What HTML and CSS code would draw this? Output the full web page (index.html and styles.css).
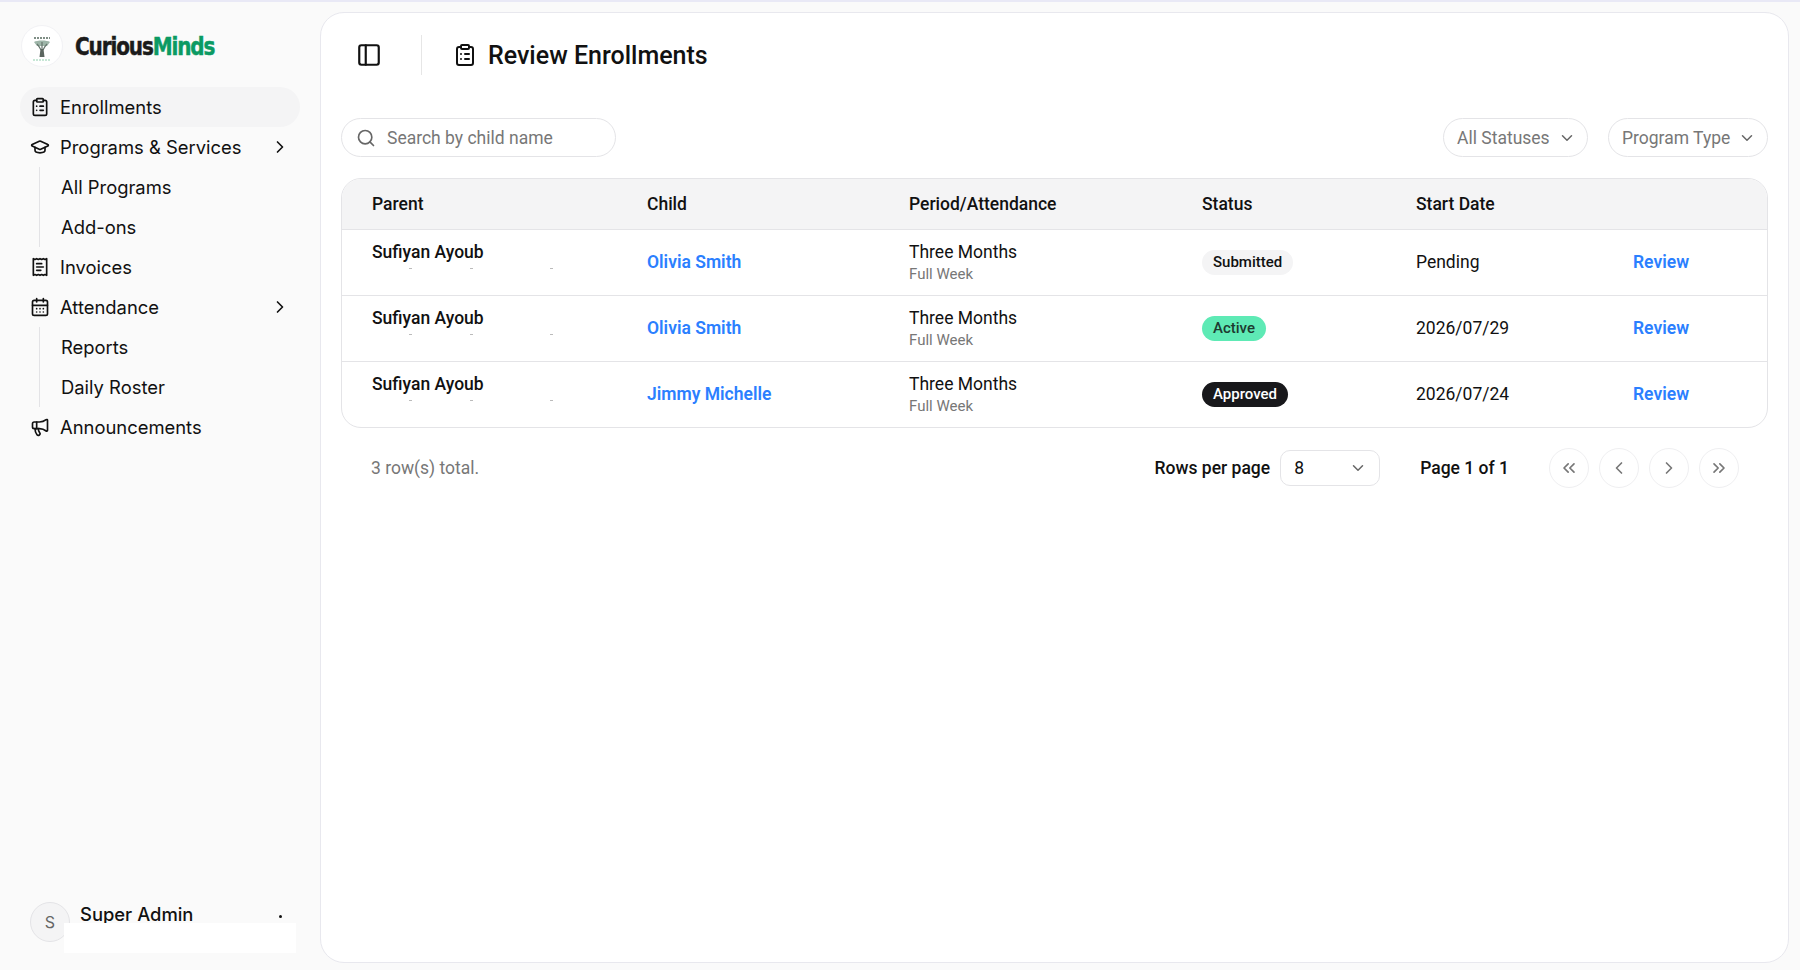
FILE: index.html
```html
<!DOCTYPE html>
<html lang="en">
<head>
    <meta charset="UTF-8">
    <meta name="viewport" content="width=device-width, initial-scale=1.0">
    <title>Review Enrollments</title>
    <link rel="stylesheet" href="styles.css">
</head>
<body>
    <aside class="sidebar">
        <div class="brand">
            <div class="brand-logo">
                <svg class="tree" width="22" height="26" viewBox="0 0 22 26" fill="none">
                    <path d="M3 2h16" stroke="#55695e" stroke-width="1.6" stroke-dasharray="2 1"/>
                    <path d="M3 6c3-2 13-2 16 0l-3 4H6z" fill="#9db5a8"/>
                    <path d="M6 8c2 2 3 4 4 6M16 8c-2 2-3 4-4 6M11 6v8" stroke="#66756d" stroke-width="1.2"/>
                    <path d="M9.5 13h3l1 8h-5z" fill="#5b655f"/>
                    <path d="M2 24h18" stroke="#8fd0ae" stroke-width="1.2" stroke-dasharray="2 1"/>
                </svg>
            </div>
            <div class="brand-name">Curious<span class="brand-green">Minds</span></div>
        </div>

        <nav class="nav">
            <a class="nav-item active">
                <svg class="icon" viewBox="0 0 24 24"><rect width="8" height="4" x="8" y="2" rx="1" ry="1"/><path d="M16 4h2a2 2 0 0 1 2 2v14a2 2 0 0 1-2 2H6a2 2 0 0 1-2-2V6a2 2 0 0 1 2-2h2"/><path d="M12 11h4"/><path d="M12 16h4"/><path d="M8 11h.01"/><path d="M8 16h.01"/></svg>
                <span>Enrollments</span>
            </a>
            <a class="nav-item">
                <svg class="icon" viewBox="0 0 24 24"><path d="M21.42 10.922a1 1 0 0 0-.019-1.838L12.83 5.18a2 2 0 0 0-1.66 0L2.6 9.08a1 1 0 0 0 0 1.832l8.57 3.908a2 2 0 0 0 1.66 0z"/><path d="M6 12.5V16a6 3 0 0 0 12 0v-3.5"/></svg>
                <span>Programs &amp; Services</span>
                <svg class="icon chevron" viewBox="0 0 24 24"><path d="m9 18 6-6-6-6"/></svg>
            </a>
            <div class="sub-nav">
                <a class="sub-item">All Programs</a>
                <a class="sub-item">Add-ons</a>
            </div>
            <a class="nav-item">
                <svg class="icon" viewBox="0 0 24 24"><path d="M4 2v20l2-1 2 1 2-1 2 1 2-1 2 1 2-1 2 1V2l-2 1-2-1-2 1-2-1-2 1-2-1-2 1Z"/><path d="M14 8H8"/><path d="M16 12H8"/><path d="M13 16H8"/></svg>
                <span>Invoices</span>
            </a>
            <a class="nav-item">
                <svg class="icon" viewBox="0 0 24 24"><path d="M8 2v4"/><path d="M16 2v4"/><rect width="18" height="18" x="3" y="4" rx="2"/><path d="M3 10h18"/><path d="M8 14h.01"/><path d="M12 14h.01"/><path d="M16 14h.01"/><path d="M8 18h.01"/><path d="M12 18h.01"/><path d="M16 18h.01"/></svg>
                <span>Attendance</span>
                <svg class="icon chevron" viewBox="0 0 24 24"><path d="m9 18 6-6-6-6"/></svg>
            </a>
            <div class="sub-nav">
                <a class="sub-item">Reports</a>
                <a class="sub-item">Daily Roster</a>
            </div>
            <a class="nav-item">
                <svg class="icon" viewBox="0 0 24 24"><path d="M11 6a13 13 0 0 0 8.4-2.8A1 1 0 0 1 21 4v12a1 1 0 0 1-1.6.8A13 13 0 0 0 11 14H5a2 2 0 0 1-2-2V8a2 2 0 0 1 2-2z"/><path d="M6 14a12 12 0 0 0 2.4 7.2 2 2 0 0 0 3.2-2.4A8 8 0 0 1 10 14"/><path d="M8 6v8"/></svg>
                <span>Announcements</span>
            </a>
        </nav>

        <div class="user">
            <div class="avatar">S</div>
            <div class="user-name">Super Admin</div>
            <div class="user-dot"></div>
            <div class="user-cover"></div>
        </div>
    </aside>

    <main class="content">
        <header class="page-header">
            <svg class="icon panel-icon" viewBox="0 0 24 24"><rect width="18" height="18" x="3" y="3" rx="2"/><path d="M9 3v18"/></svg>
            <div class="header-divider"></div>
            <svg class="icon title-icon" viewBox="0 0 24 24"><rect width="8" height="4" x="8" y="2" rx="1" ry="1"/><path d="M16 4h2a2 2 0 0 1 2 2v14a2 2 0 0 1-2 2H6a2 2 0 0 1-2-2V6a2 2 0 0 1 2-2h2"/><path d="M12 11h4"/><path d="M12 16h4"/><path d="M8 11h.01"/><path d="M8 16h.01"/></svg>
            <h1>Review Enrollments</h1>
        </header>

        <div class="toolbar">
            <div class="search">
                <svg class="icon search-icon" viewBox="0 0 24 24"><path d="m21 21-4.34-4.34"/><circle cx="11" cy="11" r="8"/></svg>
                <span>Search by child name</span>
            </div>
            <div class="filter filter-status">
                <span>All Statuses</span>
                <svg class="icon small-chevron" viewBox="0 0 24 24"><path d="m6 9 6 6 6-6"/></svg>
            </div>
            <div class="filter filter-program">
                <span>Program Type</span>
                <svg class="icon small-chevron" viewBox="0 0 24 24"><path d="m6 9 6 6 6-6"/></svg>
            </div>
        </div>

        <div class="table-wrap">
            <table class="enroll-table">
                <colgroup>
                    <col class="col-parent">
                    <col class="col-child">
                    <col class="col-period">
                    <col class="col-status">
                    <col class="col-date">
                    <col class="col-action">
                </colgroup>
                <thead>
                    <tr>
                        <th>Parent</th>
                        <th>Child</th>
                        <th>Period/Attendance</th>
                        <th>Status</th>
                        <th>Start Date</th>
                        <th></th>
                    </tr>
                </thead>
                <tbody>
                    <tr>
                        <td class="cell-stack"><div class="line-main parent-name">Sufiyan Ayoub</div><div class="specks"><i></i><i></i><i></i></div></td>
                        <td><a class="link">Olivia Smith</a></td>
                        <td class="cell-stack"><div class="line-main">Three Months</div><div class="line-sub">Full Week</div></td>
                        <td><span class="badge badge-submitted">Submitted</span></td>
                        <td>Pending</td>
                        <td><a class="link">Review</a></td>
                    </tr>
                    <tr>
                        <td class="cell-stack"><div class="line-main parent-name">Sufiyan Ayoub</div><div class="specks"><i></i><i></i><i></i></div></td>
                        <td><a class="link">Olivia Smith</a></td>
                        <td class="cell-stack"><div class="line-main">Three Months</div><div class="line-sub">Full Week</div></td>
                        <td><span class="badge badge-active">Active</span></td>
                        <td>2026/07/29</td>
                        <td><a class="link">Review</a></td>
                    </tr>
                    <tr>
                        <td class="cell-stack"><div class="line-main parent-name">Sufiyan Ayoub</div><div class="specks"><i></i><i></i><i></i></div></td>
                        <td><a class="link">Jimmy Michelle</a></td>
                        <td class="cell-stack"><div class="line-main">Three Months</div><div class="line-sub">Full Week</div></td>
                        <td><span class="badge badge-approved">Approved</span></td>
                        <td>2026/07/24</td>
                        <td><a class="link">Review</a></td>
                    </tr>
                </tbody>
            </table>
        </div>

        <div class="table-footer">
            <div class="row-count">3 row(s) total.</div>
            <div class="rows-label">Rows per page</div>
            <div class="rows-select">
                <span>8</span>
                <svg class="icon small-chevron" viewBox="0 0 24 24"><path d="m6 9 6 6 6-6"/></svg>
            </div>
            <div class="page-label">Page 1 of 1</div>
            <div class="pager">
                <button class="page-btn"><svg class="icon" viewBox="0 0 24 24"><path d="m11 17-5-5 5-5"/><path d="m18 17-5-5 5-5"/></svg></button>
                <button class="page-btn"><svg class="icon" viewBox="0 0 24 24"><path d="m15 18-6-6 6-6"/></svg></button>
                <button class="page-btn"><svg class="icon" viewBox="0 0 24 24"><path d="m9 18 6-6-6-6"/></svg></button>
                <button class="page-btn"><svg class="icon" viewBox="0 0 24 24"><path d="m6 17 5-5-5-5"/><path d="m13 17 5-5-5-5"/></svg></button>
            </div>
        </div>
    </main>
</body>
</html>
```

FILE: styles.css
```css
* {
    box-sizing: border-box;
}
html, body {
    height: 100%;
}
body {
    margin: 0;
    display: flex;
    height: 970px;
    overflow: hidden;
    background: #fafafa;
    border-top: 2px solid #e9e9f6;
    font-family: Roboto, "Liberation Sans", sans-serif;
    color: #111;
}
.icon {
    width: 20px;
    height: 20px;
    flex: none;
    fill: none;
    stroke: currentColor;
    stroke-width: 2;
    stroke-linecap: round;
    stroke-linejoin: round;
}

/* sidebar */
.sidebar {
    width: 320px;
    flex: none;
    display: flex;
    flex-direction: column;
    padding: 22px 20px 0 20px;
    font-family: Inter, "Noto Sans", sans-serif;
}
.brand {
    display: flex;
    align-items: center;
    height: 44px;
    margin-bottom: 19px;
}
.brand-logo {
    width: 42px;
    height: 42px;
    margin-left: 1px;
    border-radius: 50%;
    background: #fff;
    border: 1px solid #f2f2f5;
    display: flex;
    align-items: center;
    justify-content: center;
}
.tree {
    margin-top: 5px;
}
.brand-name {
    margin-left: 12px;
    font-family: "DejaVu Sans", sans-serif;
    font-weight: 700;
    font-size: 25px;
    letter-spacing: -1.4px;
    color: #1b1b1b;
    -webkit-text-stroke: 0.5px currentColor;
    transform: scaleX(0.8);
    transform-origin: left center;
    white-space: nowrap;
}
.brand-green {
    color: #0b9a63;
}
.nav {
    display: flex;
    flex-direction: column;
}
.nav-item {
    display: flex;
    align-items: center;
    height: 40px;
    padding: 0 11px 0 10px;
    border-radius: 20px;
    font-size: 18.4px;
    color: #111;
}
.nav-item span {
    margin-left: 10px;
}
.nav-item.active {
    background: #f4f4f5;
}
.chevron {
    margin-left: auto;
    margin-right: -1px;
}
.sub-nav {
    margin-left: 19px;
    border-left: 1px solid #e3e3e6;
}
.sub-item {
    display: flex;
    align-items: center;
    height: 40px;
    padding-left: 21px;
    font-size: 18.4px;
    color: #111;
}
.user {
    position: relative;
    margin-top: auto;
    height: 60px;
    margin-bottom: 16px;
    display: flex;
    align-items: flex-start;
    padding-left: 10px;
}
.avatar {
    width: 40px;
    height: 40px;
    margin-top: 8px;
    border-radius: 50%;
    border: 1px solid #e4e4e7;
    background: #f4f4f5;
    color: #666;
    font-size: 16px;
    display: flex;
    align-items: center;
    justify-content: center;
}
.user-name {
    margin-left: 10px;
    margin-top: 9px;
    font-size: 18.4px;
    font-weight: 500;
    line-height: 22px;
}
.user-dot {
    position: absolute;
    left: 259px;
    top: 21px;
    width: 3px;
    height: 3px;
    border-radius: 50%;
    background: #111;
}
.user-cover {
    position: absolute;
    left: 44px;
    top: 29px;
    width: 232px;
    height: 30px;
    background: #fff;
}

/* main card */
.content {
    flex: 1;
    margin: 10px 11px 7px 0;
    background: #fff;
    border: 1px solid #e8e8ee;
    border-radius: 24px;
    padding: 22px 20px 0 20px;
}
.page-header {
    display: flex;
    align-items: center;
    height: 40px;
    margin-bottom: 43px;
}
.panel-icon {
    width: 26px;
    height: 26px;
    margin-left: 15px;
}
.header-divider {
    width: 1px;
    height: 40px;
    margin: 0 31px 0 39px;
    background: #e6e6e6;
}
.title-icon {
    width: 24px;
    height: 24px;
}
h1 {
    margin: 0 0 0 11px;
    font-size: 25px;
    font-weight: 500;
}
.toolbar {
    display: flex;
    align-items: center;
    height: 39px;
    margin-bottom: 21px;
}
.search {
    width: 275px;
    height: 39px;
    display: flex;
    align-items: center;
    padding-left: 14px;
    border: 1px solid #e4e4e7;
    border-radius: 20px;
    color: #777;
    font-size: 17.5px;
}
.search-icon {
    width: 20px;
    height: 20px;
    margin-right: 11px;
    color: #666;
}
.filter {
    height: 39px;
    display: flex;
    align-items: center;
    justify-content: space-between;
    padding: 0 11px 0 13px;
    border: 1px solid #e4e4e7;
    border-radius: 20px;
    color: #777;
    font-size: 17.5px;
}
.filter-status {
    width: 145px;
    margin-left: auto;
}
.filter-program {
    width: 160px;
    margin-left: 20px;
}
.small-chevron {
    width: 18px;
    height: 18px;
    color: #666;
}
.table-wrap {
    border: 1px solid #e4e4e7;
    border-radius: 20px;
    overflow: hidden;
}
.enroll-table {
    width: 100%;
    border-collapse: collapse;
    table-layout: fixed;
    font-size: 17.5px;
}
.col-parent { width: 275px; }
.col-child { width: 262px; }
.col-period { width: 293px; }
.col-status { width: 214px; }
.col-date { width: 217px; }
.enroll-table th {
    height: 50px;
    padding: 0 0 0 30px;
    text-align: left;
    font-weight: 500;
    background: #f4f4f5;
    border-bottom: 1px solid #e4e4e7;
}
.enroll-table td {
    height: 66px;
    padding: 0 0 0 30px;
    border-bottom: 1px solid #e4e4e7;
    vertical-align: middle;
}
.enroll-table td.cell-stack {
    padding-top: 2px;
}
.enroll-table tr:last-child td {
    border-bottom: none;
}
.line-main {
    line-height: 22px;
}
.parent-name {
    font-weight: 500;
}
.line-sub {
    line-height: 22px;
    font-size: 15px;
    color: #777;
}
.specks {
    display: flex;
    height: 22px;
    padding-top: 5px;
    padding-left: 37px;
}
.specks i {
    display: block;
    width: 3px;
    height: 1px;
    margin-right: 58px;
    background: #bbb;
}
.specks i:last-child {
    margin-left: 19px;
}
.link {
    color: #2b7fff;
    font-weight: 600;
}
.badge {
    display: inline-block;
    height: 25px;
    line-height: 25px;
    padding: 0 11px;
    border-radius: 13px;
    font-size: 15px;
    font-weight: 500;
}
.badge-submitted {
    background: #f4f4f5;
    color: #111;
}
.badge-active {
    background: #5eeab5;
    color: #1d3a30;
}
.badge-approved {
    background: #18181b;
    color: #fff;
}
.table-footer {
    display: flex;
    align-items: center;
    height: 40px;
    margin-top: 20px;
    font-size: 17.5px;
}
.row-count {
    margin-left: 30px;
    color: #777;
}
.rows-label {
    margin-left: auto;
    font-weight: 500;
}
.rows-select {
    width: 100px;
    height: 36px;
    margin-left: 10px;
    padding: 0 12px 0 13px;
    display: flex;
    align-items: center;
    justify-content: space-between;
    border: 1px solid #e4e4e7;
    border-radius: 10px;
}
.page-label {
    margin-left: 40px;
    font-weight: 500;
}
.pager {
    display: flex;
    gap: 10px;
    margin-left: 40px;
    margin-right: 29px;
}
.page-btn {
    width: 40px;
    height: 40px;
    padding: 0;
    display: flex;
    align-items: center;
    justify-content: center;
    background: #fff;
    border: 1px solid #efeff1;
    border-radius: 50%;
    color: #777;
}
```
